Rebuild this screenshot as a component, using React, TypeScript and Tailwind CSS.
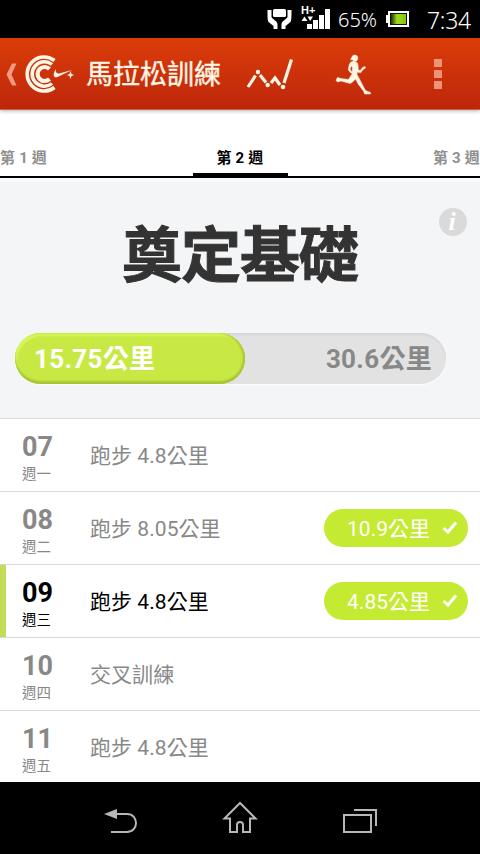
type Day = {
  date: string;
  weekday: string;
  workout: string;
  done?: string;
  today?: boolean;
};

const days: Day[] = [
  { date: "07", weekday: "週一", workout: "跑步 4.8公里" },
  { date: "08", weekday: "週二", workout: "跑步 8.05公里", done: "10.9公里" },
  { date: "09", weekday: "週三", workout: "跑步 4.8公里", done: "4.85公里", today: true },
  { date: "10", weekday: "週四", workout: "交叉訓練" },
  { date: "11", weekday: "週五", workout: "跑步 4.8公里" },
];

const StatusBar = () => (
  <div className="flex h-[38px] shrink-0 items-center bg-black pl-[267px] font-['Noto_Sans',sans-serif] text-white">
    <svg width="25" height="22" viewBox="0 0 25 22" className="mt-[2px] shrink-0" fill="#fff">
      <rect x="6" y="0" width="13" height="8" rx="1.500" />
      <path d="M0.500 1 H4.500 V8 C5 10 10.500 12 10.500 15 V20 H6.500 V17 L1.500 13 C0.500 11 0.500 8 0.500 1 Z" />
      <path d="M24.500 1 H20.500 V8 C20 10 14.500 12 14.500 15 V20 H18.500 V17 L23.500 13 C24.500 11 24.500 8 24.500 1 Z" />
    </svg>
    <div className="relative ml-[8px] h-[26px] w-[31px] shrink-0">
      <span className="absolute top-0 left-[1px] font-['Liberation_Sans',sans-serif] text-[11px] leading-[9px] font-bold text-white">H+</span>
      <svg width="31" height="26" viewBox="0 0 31 26" fill="#fff" className="absolute top-0 left-0">
        <path d="M1.500 15 L4.500 10.500 L7.500 15 Z M7.500 10.500 L13 10.500 L10.200 15 Z" />
        <rect x="7" y="18" width="5" height="5" />
        <rect x="13" y="14" width="5" height="9" />
        <rect x="19" y="9" width="5" height="14" />
        <rect x="25" y="3" width="5" height="20" />
      </svg>
    </div>
    <span className="mt-[2px] ml-[7px] w-[40px] shrink-0 text-[20px] leading-[38px] font-light">65%</span>
    <svg width="23" height="16" viewBox="0 0 23 16" className="ml-[8px] shrink-0">
      <defs>
        <linearGradient id="charge">
          <stop offset="0" stopColor="#1c2a08" />
          <stop offset="0.4" stopColor="#9bdc1c" />
          <stop offset="1" stopColor="#7fc40c" />
        </linearGradient>
      </defs>
      <rect x="0" y="4" width="3" height="8" fill="#fff" />
      <rect x="3" y="1" width="19" height="14" fill="#111" stroke="#fff" strokeWidth="2" />
      <rect x="5" y="3" width="15" height="10" fill="url(#charge)" />
    </svg>
    <span className="mt-[1px] ml-[18px] text-[23px] leading-[38px] font-light tracking-[-0.3px]">7:34</span>
  </div>
);

const Header = () => (
  <div className="relative z-10 flex h-[72px] shrink-0 items-center border-b border-[#c8604a] bg-linear-to-b from-[#db3d09] to-[#bd260a] shadow-[0_1px_4px_rgba(0,0,0,0.3)]">
    <svg width="11" height="23" viewBox="0 0 11 23" className="mt-[1px] ml-[6px] shrink-0" fill="#f09a80">
      <path d="M6 0.500 H10.500 L5.500 11.500 L10.500 22.500 H6 L0.500 11.500 Z" />
    </svg>
    <svg width="50" height="40" viewBox="0 0 50 40" className="ml-[7px] shrink-0" fill="none" stroke="#fff6e6">
      <path d="M30.500 6.500 A17 17 0 1 0 30.500 33.500" strokeWidth="3.600" />
      <path d="M28 10.500 A12.200 12.200 0 1 0 28 29.500" strokeWidth="3.500" />
      <path d="M25.500 15 A7 7 0 1 0 25.500 25" strokeWidth="4.200" />
      <path
        d="M32 15 C28.500 20 29 25 34 22.800 L48 16 L36 19.200 C33 20 31 18.500 32 15 Z M46.500 17 L47.500 20 L50 21 L47.500 22 L46.500 25 L45.500 22 L43 21 L45.500 20 Z"
        fill="#fff6e6"
        stroke="none"
      />
    </svg>
    <h1 className="mt-[2px] ml-[12px] w-[160px] shrink-0 text-[27px] leading-[40px] text-[#fff6e6] [-webkit-text-stroke:0.4px_#fff6e6]">馬拉松訓練</h1>
    <svg width="48" height="34" viewBox="0 0 48 34" className="shrink-0" fill="none" stroke="#fff6e6" strokeWidth="3.200">
      <path d="M2 30 L9.500 18.500" />
      <path d="M14 18 L20 25.500" />
      <path d="M25 26 L29 21 L34 28" />
      <path d="M38 26 L45.500 2.500" />
      <g fill="#fff6e6" stroke="none">
        <circle cx="12" cy="15" r="2.200" />
        <circle cx="21.700" cy="28" r="2.200" />
        <circle cx="37" cy="30" r="2.300" />
      </g>
    </svg>
    <svg width="36" height="42" viewBox="0 0 36 42" className="mt-[2px] ml-[41px] shrink-0" fill="#fff6e6" stroke="#fff6e6" strokeWidth="0.500">
      <path d="M16.500 4 C17 1.500 19 0.500 21.500 1.500 C23.500 2.500 23 5.500 21.800 6.800 C20.800 7.800 19 7.500 18 6 L15.500 5.500 Z" />
      <path d="M18.500 7 L22.500 9 C23.300 11 23.200 13.500 23.300 16 L25.200 16.500 L27.500 13.500 L30 12.500 L30.500 14 L28.500 15.300 L25.500 18.800 L22.300 18 L22 20.500 L25 26 L27.500 31 L30.500 36.500 L35.500 38.500 V40 H29.500 L28.800 37.500 L23.500 30.500 L20.500 25 L17 28.500 L15 29.500 L6 27 L2.500 28 L1 26.200 L2.500 23.500 L6 24.500 L13.500 25.500 L17 20 L17.500 13.500 L16.300 12 L15 15 L17 18.500 L16 19.300 L13.300 16 C13.500 12.500 14.500 9 16 8 Z" />
    </svg>
    <div className="ml-[63px] flex flex-col gap-[3px]">
      <i className="h-[8px] w-[8px] bg-[#ee9278]" />
      <i className="h-[8px] w-[8px] bg-[#ee9278]" />
      <i className="h-[8px] w-[8px] bg-[#ee9278]" />
    </div>
  </div>
);

const WeekTabs = () => (
  <div className="flex h-[68px] shrink-0 items-end justify-between border-b-2 border-black bg-white text-[15px] font-bold tracking-[0.2px] whitespace-nowrap text-[#909090]">
    <span className="w-[95px] pb-[6px] leading-[24px]">第 1 週</span>
    <span className="w-[95px] border-b-[3px] border-black pb-[3px] text-center leading-[24px] text-black">第 2 週</span>
    <span className="w-[95px] pb-[6px] text-right leading-[24px]">第 3 週</span>
  </div>
);

const Summary = () => (
  <div className="relative flex h-[240px] shrink-0 flex-col border-t-4 border-[#fafafb] bg-[#f4f5f7]">
    <h2 className="mt-[35px] text-center text-[60px] leading-[80px] font-bold tracking-[-1px] text-[#333] [-webkit-text-stroke:1px_#333]">奠定基礎</h2>
    <div className="absolute top-[26px] right-[13px] flex h-[28px] w-[28px] items-center justify-center rounded-full bg-[#dadada] pr-[2px] font-['Liberation_Serif',serif] text-[26px] leading-none font-bold text-white italic">
      i
    </div>
    <div className="mt-[36px] ml-[15px] flex h-[51px] w-[431px] rounded-full bg-[#e2e2e2] text-[26px] leading-[52px] font-bold tracking-[0.3px] shadow-[inset_0_2px_2px_#d4d5da,0_1px_2px_#fff]">
      <div className="w-[230px] rounded-full bg-[#c8e944] pl-[19px] text-white shadow-[inset_0_-3px_2px_#a9c436,inset_-2px_0_2px_#a9c436,inset_2px_3px_2px_#d6f858]">
        15.75公里
      </div>
      <div className="flex-1 pr-[14px] text-right text-[#888]">30.6公里</div>
    </div>
  </div>
);

const DayRow = ({ day }: { day: Day }) => (
  <div className={`flex h-[73px] shrink-0 items-center border-t border-[#d9d9d9] bg-white ${day.today ? "text-black" : "text-[#888]"}`}>
    <div className={`h-full w-[6px] ${day.today ? "bg-[#c3dc55]" : ""}`} />
    <div className="w-[84px] pl-[16px]">
      <div className="mt-[9px] text-[27px] leading-[30px] font-bold">{day.date}</div>
      <div className="mt-[1px] text-[14.5px] leading-[24px]">{day.weekday}</div>
    </div>
    <div className="mt-[2px] flex-1 text-[21px] leading-[30px] tracking-[0.05px]">{day.workout}</div>
    {day.done ? (
      <div className="mr-[12px] flex h-[38px] w-[144px] items-center justify-end rounded-full bg-[#c5ea32] pr-[10px] text-[21px] text-white">
        <span className="mt-[2px] leading-[36px]">{day.done}</span>
        <svg width="16" height="14" viewBox="0 0 16 14" className="ml-[12px]" fill="none" stroke="#fff" strokeWidth="3">
          <path d="M1.500 7 L6 11 L14 1.500" />
        </svg>
      </div>
    ) : null}
  </div>
);

const NavBar = () => (
  <div className="flex h-[72px] shrink-0 items-center bg-black pl-[103px]">
    <svg width="36" height="32" viewBox="0 0 36 32" className="mt-[8px] shrink-0" fill="none" stroke="#b8b8b8" strokeWidth="2">
      <path d="M12 8 H24 C36 8 36 26 24 26 H8" />
      <path d="M1 8 L14 3 V13 Z" fill="#b8b8b8" stroke="none" />
    </svg>
    <svg width="36" height="34" viewBox="0 0 36 34" className="ml-[83px] shrink-0" fill="none" stroke="#b8b8b8" strokeWidth="2">
      <path d="M18 2 L2.500 17.500 H8 V31 H15 V24 C15 20 21 20 21 24 V31 H28 V17.500 H33.500 Z" />
    </svg>
    <svg width="36" height="28" viewBox="0 0 36 28" className="mt-[6px] ml-[83px] shrink-0" fill="none" stroke="#b8b8b8" strokeWidth="2">
      <rect x="3" y="8" width="27" height="17" />
      <path d="M13 3 H35 V19" />
    </svg>
  </div>
);

const App = () => {
  return (
    <div className="flex h-[854px] w-[480px] flex-col overflow-hidden bg-white font-['Roboto','Noto_Sans_CJK_TC',sans-serif]">
      <StatusBar />
      <Header />
      <WeekTabs />
      <Summary />
      <div className="flex h-[364px] shrink-0 flex-col overflow-hidden">
        {days.map((day) => (
          <DayRow key={day.date} day={day} />
        ))}
      </div>
      <NavBar />
    </div>
  );
};

export default App;
